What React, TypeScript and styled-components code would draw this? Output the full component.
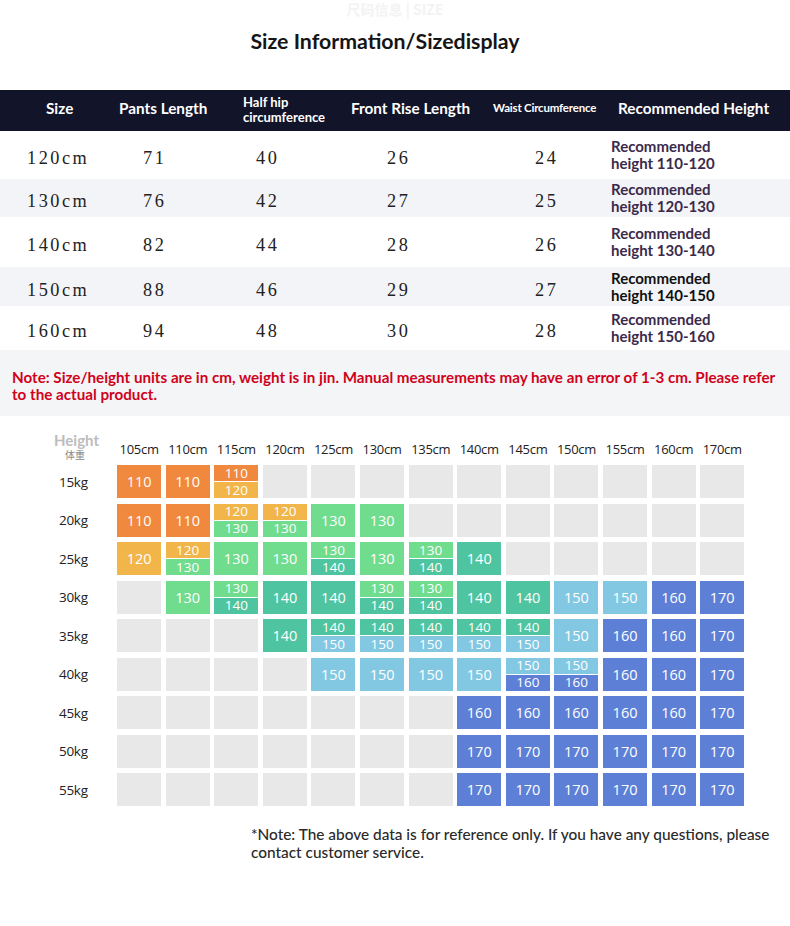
import styled, { createGlobalStyle } from 'styled-components';

const GlobalStyle = createGlobalStyle`
  html, body {
    margin: 0;
    padding: 0;
    background: #fff;
  }
  body {
    font-family: Lato, 'Noto Sans', sans-serif;
    color: #1a1a1a;
  }
`;

const heads = ['Size', 'Pants Length', 'Half hip circumference', 'Front Rise Length', 'Waist Circumference', 'Recommended Height'];

const rows = [
  { size: '120cm', vals: ['71', '40', '26', '24'], rec: '110-120', h: 48, alt: false, dark: false },
  { size: '130cm', vals: ['76', '42', '27', '25'], rec: '120-130', h: 38, alt: true, dark: false },
  { size: '140cm', vals: ['82', '44', '28', '26'], rec: '130-140', h: 50, alt: false, dark: false },
  { size: '150cm', vals: ['88', '46', '29', '27'], rec: '140-150', h: 39, alt: true, dark: true },
  { size: '160cm', vals: ['94', '48', '30', '28'], rec: '150-160', h: 44, alt: false, dark: false },
];

const heights = ['105cm', '110cm', '115cm', '120cm', '125cm', '130cm', '135cm', '140cm', '145cm', '150cm', '155cm', '160cm', '170cm'];

const _ = '';
const chart: { kg: string; cells: string[] }[] = [
  { kg: '15kg', cells: ['110', '110', '110/120', _, _, _, _, _, _, _, _, _, _] },
  { kg: '20kg', cells: ['110', '110', '120/130', '120/130', '130', '130', _, _, _, _, _, _, _] },
  { kg: '25kg', cells: ['120', '120/130', '130', '130', '130/140', '130', '130/140', '140', _, _, _, _, _] },
  { kg: '30kg', cells: [_, '130', '130/140', '140', '140', '130/140', '130/140', '140', '140', '150', '150', '160', '170'] },
  { kg: '35kg', cells: [_, _, _, '140', '140/150', '140/150', '140/150', '140/150', '140/150', '150', '160', '160', '170'] },
  { kg: '40kg', cells: [_, _, _, _, '150', '150', '150', '150', '150/160', '150/160', '160', '160', '170'] },
  { kg: '45kg', cells: [_, _, _, _, _, _, _, '160', '160', '160', '160', '160', '170'] },
  { kg: '50kg', cells: [_, _, _, _, _, _, _, '170', '170', '170', '170', '170', '170'] },
  { kg: '55kg', cells: [_, _, _, _, _, _, _, '170', '170', '170', '170', '170', '170'] },
];

const tone: Record<string, string> = {
  '110': '#f0883e',
  '120': '#f2b54a',
  '130': '#70dc8e',
  '140': '#4fc4a0',
  '150': '#82c8e3',
  '160': '#5d7fd6',
  '170': '#5d7fd6',
};

export default function App() {
  return (
    <S.Page>
      <GlobalStyle />
      <S.Ghost>尺码信息 | SIZE</S.Ghost>
      <S.Title>Size Information/Sizedisplay</S.Title>

      <S.Table>
        <S.HeadRow>
          {heads.map((h) => (
            <S.HeadCell key={h}>{h}</S.HeadCell>
          ))}
        </S.HeadRow>
        {rows.map((r) => (
          <S.BodyRow key={r.size} $h={r.h} $alt={r.alt}>
            <S.NumCell>{r.size}</S.NumCell>
            {r.vals.map((v, i) => (
              <S.NumCell key={i}>{v}</S.NumCell>
            ))}
            <S.RecCell $dark={r.dark}>
              Recommended
              <br />
              height {r.rec}
            </S.RecCell>
          </S.BodyRow>
        ))}
      </S.Table>

      <S.Note>
        Note: Size/height units are in cm, weight is in jin. Manual measurements may have an error of 1-3 cm. Please refer to the actual
        product.
      </S.Note>

      <S.Chart>
        <S.Corner>
          <span className='en'>Height</span>
          <span className='cn'>体重</span>
        </S.Corner>
        {heights.map((h) => (
          <S.ColLabel key={h}>{h}</S.ColLabel>
        ))}
        {chart.map((row) => [
          <S.RowLabel key={row.kg}>{row.kg}</S.RowLabel>,
          ...row.cells.map((c, i) => {
            if (!c) return <S.Cell key={row.kg + i} $bg='#e8e8e8' />;
            const [a, b] = c.split('/');
            if (!b) {
              return (
                <S.Cell key={row.kg + i} $bg={tone[a]}>
                  {a}
                </S.Cell>
              );
            }
            return (
              <S.Split key={row.kg + i}>
                <S.Half $bg={tone[a]}>{a}</S.Half>
                <S.Half $bg={tone[b]}>{b}</S.Half>
              </S.Split>
            );
          }),
        ])}
      </S.Chart>

      <S.Footer>*Note: The above data is for reference only. If you have any questions, please contact customer service.</S.Footer>
    </S.Page>
  );
}

const S = {
  Page: styled.div`
    width: 790px;
    min-height: 926px;
    background: #fff;
  `,
  Ghost: styled.div`
    height: 18px;
    text-align: center;
    font-family: 'Noto Sans CJK SC', Lato, sans-serif;
    font-size: 14px;
    line-height: 18px;
    font-weight: 700;
    color: #f3f3f3;
  `,
  Title: styled.h1`
    margin: 10px 0 0;
    height: 62px;
    padding-right: 20px;
    text-align: center;
    font-size: 21.3px;
    line-height: 26px;
    font-weight: 700;
    color: #151515;
  `,
  Table: styled.div`
    display: flex;
    flex-direction: column;
  `,
  HeadRow: styled.div`
    display: grid;
    grid-template-columns: 110px 125px 105px 142px 118px 1fr;
    align-items: center;
    height: 41px;
    box-sizing: border-box;
    padding-bottom: 6px;
    background: #121429;
    color: #fff;
    & > :nth-child(1) { padding-left: 46px; }
    & > :nth-child(2) { padding-left: 9px; }
    & > :nth-child(3) { padding-left: 8px; font-size: 13px; line-height: 15px; padding-right: 12px; padding-top: 4px; }
    & > :nth-child(4) { padding-left: 11px; }
    & > :nth-child(5) { padding-left: 11px; font-size: 11.5px; letter-spacing: -0.2px; }
    & > :nth-child(6) { padding-left: 18px; }
  `,
  HeadCell: styled.div`
    font-size: 15.3px;
    font-weight: 700;
    line-height: 18px;
  `,
  BodyRow: styled.div<{ $h: number; $alt: boolean }>`
    display: grid;
    grid-template-columns: 110px 125px 105px 142px 118px 1fr;
    align-items: center;
    height: ${(p) => p.$h}px;
    background: ${(p) => (p.$alt ? '#f3f4f7' : '#fff')};
    & > :nth-child(1) { padding-left: 27px; }
    & > :nth-child(2) { padding-left: 33px; }
    & > :nth-child(3) { padding-left: 21px; }
    & > :nth-child(4) { padding-left: 47px; }
    & > :nth-child(5) { padding-left: 53px; }
    & > :nth-child(6) { padding-left: 11px; }
  `,
  NumCell: styled.div`
    padding-top: 7px;
    font-family: 'Liberation Serif', serif;
    font-size: 18.3px;
    letter-spacing: 2.5px;
    color: #222;
  `,
  RecCell: styled.div<{ $dark: boolean }>`
    font-size: 15px;
    font-weight: 700;
    line-height: 17px;
    color: ${(p) => (p.$dark ? '#111' : '#3b2a4b')};
  `,
  Note: styled.p`
    margin: 0;
    height: 66px;
    box-sizing: border-box;
    padding: 19px 12px 0;
    background: #f4f5f7;
    color: #d0021b;
    font-size: 15.2px;
    font-weight: 700;
    line-height: 17px;
  `,
  Chart: styled.div`
    display: grid;
    grid-template-columns: 67.5px repeat(13, 44px);
    grid-template-rows: 43.5px repeat(9, 33px);
    column-gap: 4.6px;
    row-gap: 5.5px;
    margin-left: 45px;
    padding-right: 46px;
  `,
  Corner: styled.div`
    display: flex;
    flex-direction: column;
    padding: 17px 0 0 9px;
    .en {
      font-size: 15px;
      font-weight: 700;
      color: #bcbcbc;
      line-height: 15px;
    }
    .cn {
      font-family: 'Noto Sans CJK SC', sans-serif;
      font-size: 10px;
      line-height: 10px;
      color: #8a8a8a;
      padding-left: 11px;
      margin-top: 2px;
    }
  `,
  ColLabel: styled.div`
    display: flex;
    align-items: flex-end;
    justify-content: center;
    padding-bottom: 1.5px;
    font-family: 'Open Sans', sans-serif;
    font-size: 13px;
    color: #222;
    letter-spacing: -0.3px;
  `,
  RowLabel: styled.div`
    display: flex;
    align-items: center;
    padding-left: 14px;
    font-family: 'Open Sans', sans-serif;
    font-size: 13.5px;
    color: #222;
    letter-spacing: -0.3px;
  `,
  Cell: styled.div<{ $bg: string }>`
    display: flex;
    align-items: center;
    justify-content: center;
    background: ${(p) => p.$bg};
    color: #fff;
    font-family: 'Open Sans', sans-serif;
    font-size: 14.5px;
  `,
  Split: styled.div`
    display: grid;
    grid-template-rows: 1fr 1fr;
    row-gap: 1px;
    background: #fff;
  `,
  Half: styled.div<{ $bg: string }>`
    display: flex;
    align-items: center;
    justify-content: center;
    overflow: hidden;
    background: ${(p) => p.$bg};
    color: #fff;
    font-family: 'Open Sans', sans-serif;
    font-size: 13.5px;
    line-height: 15px;
  `,
  Footer: styled.p`
    margin: 19px 0 0;
    padding: 0 12px 0 251px;
    font-size: 15.4px;
    line-height: 18px;
    font-weight: 500;
    color: #2a2a2a;
  `,
};
